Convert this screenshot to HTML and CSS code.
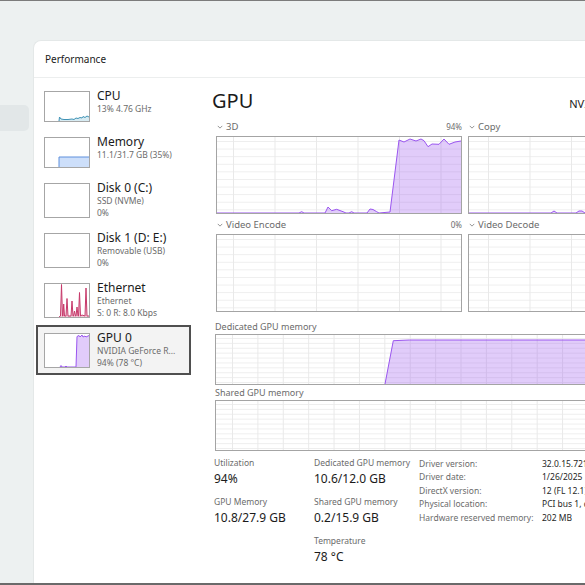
FILE: index.html
```html
<!DOCTYPE html>
<html lang="en">
<head>
    <meta charset="UTF-8">
    <meta name="viewport" content="width=device-width, initial-scale=1.0">
    <title>Task Manager - Performance</title>
    <link rel="stylesheet" href="styles.css">
</head>
<body>
<div class="screen">

    <!-- left navigation strip -->
    <nav class="nav">
        <div class="nav-pill"></div>
    </nav>

    <section class="card">
        <header class="card-header">Performance</header>

        <div class="card-body">
            <!-- device list -->
            <aside class="sidebar">
                <div class="item">
                    <div class="thumb">
                        <svg viewBox="0 0 44 29" preserveAspectRatio="none">
                            <polygon class="fill-cpu" points="14,29 14.5,25 16,27 19,27.5 23,27.5 27,27 29,27.5 31,26 33,26.5 35,25.5 37,26 38,24.5 40,25.5 42,24 44,25 44,29"/>
                            <polyline class="line-cpu" points="14,29 14.5,25 16,27 19,27.5 23,27.5 27,27 29,27.5 31,26 33,26.5 35,25.5 37,26 38,24.5 40,25.5 42,24 44,25"/>
                        </svg>
                    </div>
                    <div class="item-text">
                        <div class="item-title">CPU</div>
                        <div class="item-sub">13% 4.76 GHz</div>
                    </div>
                </div>

                <div class="item">
                    <div class="thumb">
                        <svg viewBox="0 0 44 29" preserveAspectRatio="none">
                            <polygon class="fill-mem" points="14,29 14,19 44,19 44,29"/>
                            <polyline class="line-mem" points="14,29 14,19 44,19"/>
                        </svg>
                    </div>
                    <div class="item-text">
                        <div class="item-title">Memory</div>
                        <div class="item-sub">11.1/31.7 GB (35%)</div>
                    </div>
                </div>

                <div class="item">
                    <div class="thumb thumb-lg"></div>
                    <div class="item-text">
                        <div class="item-title">Disk 0 (C:)</div>
                        <div class="item-sub">SSD (NVMe)</div>
                        <div class="item-sub">0%</div>
                    </div>
                </div>

                <div class="item">
                    <div class="thumb thumb-lg"></div>
                    <div class="item-text">
                        <div class="item-title">Disk 1 (D: E:)</div>
                        <div class="item-sub">Removable (USB)</div>
                        <div class="item-sub">0%</div>
                    </div>
                </div>

                <div class="item">
                    <div class="thumb thumb-lg">
                        <svg viewBox="0 0 44 33" preserveAspectRatio="none">
                            <polygon class="fill-net" points="14,33 15.5,32 16.5,0.5 17.5,32 18,32 18.7,20 19.5,32 21,32 22,14.5 23,32 26,32 27,17 28,32 28.5,32 29.5,27 30.5,32 31,32 32,23 33,32 33.5,32 34.5,8.5 35.5,32 37,31 40,32 41,4 42,32 44,32 44,33"/>
                            <polyline class="line-net" points="14,33 15.5,32 16.5,0.5 17.5,32 18,32 18.7,20 19.5,32 21,32 22,14.5 23,32 26,32 27,17 28,32 28.5,32 29.5,27 30.5,32 31,32 32,23 33,32 33.5,32 34.5,8.5 35.5,32 37,31 40,32 41,4 42,32 44,32"/>
                        </svg>
                    </div>
                    <div class="item-text">
                        <div class="item-title">Ethernet</div>
                        <div class="item-sub">Ethernet</div>
                        <div class="item-sub">S: 0 R: 8.0 Kbps</div>
                    </div>
                </div>

                <div class="item active">
                    <div class="thumb thumb-lg">
                        <svg viewBox="0 0 44 33" preserveAspectRatio="none">
                            <polygon class="fill-gpu" points="15,33 16,31.5 17,33 20,33 21,32 22,33 31,33 32,2.5 34,1.5 35,3 37,1 38,3 40,2 41,3 44,1.5 44,33"/>
                            <polyline class="line-gpu" points="15,33 16,31.5 17,33 20,33 21,32 22,33 31,33 32,2.5 34,1.5 35,3 37,1 38,3 40,2 41,3 44,1.5"/>
                        </svg>
                    </div>
                    <div class="item-text">
                        <div class="item-title">GPU 0</div>
                        <div class="item-sub">NVIDIA GeForce R...</div>
                        <div class="item-sub">94% (78 °C)</div>
                    </div>
                </div>
            </aside>

            <!-- GPU details -->
            <main class="main">
                <div class="main-head">
                    <h1>GPU</h1>
                    <span class="gpu-name">NVIDIA GeForce RTX 4070 Ti</span>
                </div>

                <div class="engines">
                    <div class="engine">
                        <div class="graph-label">
                            <svg class="chevron" viewBox="0 0 8 5"><polyline points="1,1 4,4 7,1"/></svg>
                            <span>3D</span>
                            <span class="pct">94%</span>
                        </div>
                        <div class="graph graph-engine">
                            <svg viewBox="0 0 244 76" preserveAspectRatio="none">
                                <polygon class="fill-gpu" points="0,76 82,76 84.7,74.7 87,76 108,76 111,70 114.7,73.7 119.7,72.3 126,74.7 129,76 132,76 134.7,74.7 137,76 150,76 153,72 156,72.5 159.7,74.7 162,76 173,75 182,3 187,5 193,2 199,4 204,2 207,3.7 211,9.7 215,7 222,7.3 227,2 232,7.3 238,5 244,4 244,76"/>
                                <polyline class="line-gpu" points="0,76 82,76 84.7,74.7 87,76 108,76 111,70 114.7,73.7 119.7,72.3 126,74.7 129,76 132,76 134.7,74.7 137,76 150,76 153,72 156,72.5 159.7,74.7 162,76 173,75 182,3 187,5 193,2 199,4 204,2 207,3.7 211,9.7 215,7 222,7.3 227,2 232,7.3 238,5 244,4"/>
                            </svg>
                        </div>
                    </div>

                    <div class="engine">
                        <div class="graph-label">
                            <svg class="chevron" viewBox="0 0 8 5"><polyline points="1,1 4,4 7,1"/></svg>
                            <span>Copy</span>
                            <span class="pct">0%</span>
                        </div>
                        <div class="graph graph-engine shift">
                            <svg viewBox="0 0 244 76" preserveAspectRatio="none">
                                <polygon class="fill-gpu" points="82,76 85,74 88,76 107,76 110,74 113,74 116,76"/>
                                <polyline class="line-gpu" points="0,76 82,76 85,74 88,76 107,76 110,74 113,74 116,76 244,76"/>
                            </svg>
                        </div>
                    </div>

                    <div class="engine">
                        <div class="graph-label">
                            <svg class="chevron" viewBox="0 0 8 5"><polyline points="1,1 4,4 7,1"/></svg>
                            <span>Video Encode</span>
                            <span class="pct">0%</span>
                        </div>
                        <div class="graph graph-engine"></div>
                    </div>

                    <div class="engine">
                        <div class="graph-label">
                            <svg class="chevron" viewBox="0 0 8 5"><polyline points="1,1 4,4 7,1"/></svg>
                            <span>Video Decode</span>
                            <span class="pct">0%</span>
                        </div>
                        <div class="graph graph-engine shift"></div>
                    </div>
                </div>

                <div class="mem-label first">Dedicated GPU memory</div>
                <div class="graph graph-mem">
                    <svg viewBox="0 0 497 49" preserveAspectRatio="none">
                        <polygon class="fill-gpu" points="169,49 177.3,5.7 193.3,5 497,5 497,49"/>
                        <polyline class="line-gpu" points="169,49 177.3,5.7 193.3,5 497,5"/>
                    </svg>
                </div>

                <div class="mem-label">Shared GPU memory</div>
                <div class="graph graph-mem"></div>

                <div class="stats">
                    <div class="stat-col">
                        <div class="stat">
                            <div class="stat-label">Utilization</div>
                            <div class="stat-value">94%</div>
                        </div>
                        <div class="stat">
                            <div class="stat-label">GPU Memory</div>
                            <div class="stat-value">10.8/27.9 GB</div>
                        </div>
                    </div>
                    <div class="stat-col">
                        <div class="stat">
                            <div class="stat-label">Dedicated GPU memory</div>
                            <div class="stat-value">10.6/12.0 GB</div>
                        </div>
                        <div class="stat">
                            <div class="stat-label">Shared GPU memory</div>
                            <div class="stat-value">0.2/15.9 GB</div>
                        </div>
                        <div class="stat">
                            <div class="stat-label">Temperature</div>
                            <div class="stat-value">78 °C</div>
                        </div>
                    </div>
                    <dl class="details">
                        <dt>Driver version:</dt><dd>32.0.15.7216</dd>
                        <dt>Driver date:</dt><dd>1/26/2025</dd>
                        <dt>DirectX version:</dt><dd>12 (FL 12.1)</dd>
                        <dt>Physical location:</dt><dd>PCI bus 1, device 0, function 0</dd>
                        <dt>Hardware reserved memory:</dt><dd>202 MB</dd>
                    </dl>
                </div>
            </main>
        </div>
    </section>

</div>
</body>
</html>
```

FILE: styles.css
```css
/* --- Page --- */
body {
    margin: 0;
    font-family: "Noto Sans", "Open Sans", sans-serif;
    color: #1b1b1b;
    background: #edf1f1;
}

.screen {
    display: flex;
    width: 585px;
    height: 585px;
    box-sizing: border-box;
    border-top: 1px solid #7c7c7c;
    border-bottom: 2px solid #6a6a6a;
    overflow: hidden;
}

/* --- Nav strip --- */
.nav {
    width: 33px;
    flex: none;
    padding-top: 104px;
}

.nav-pill {
    width: 29px;
    height: 26px;
    background: #e2e7e8;
    border-radius: 0 5px 5px 0;
}

/* --- Card --- */
.card {
    flex: 1;
    min-width: 0;
    margin-top: 39px;
    background: #fff;
    border-top: 1px solid #e4e8e8;
    border-left: 1px solid #e4e8e8;
    border-top-left-radius: 8px;
    overflow: hidden;
    display: flex;
    flex-direction: column;
}

.card-header {
    height: 36px;
    flex: none;
    display: flex;
    align-items: center;
    padding-left: 11px;
    font-size: 10px;
    border-bottom: 1px solid #eceeee;
}

.card-body {
    display: flex;
    flex: 1;
}

/* --- Sidebar list --- */
.sidebar {
    width: 171px;
    flex: none;
    padding: 5px 0 0 2px;
    box-sizing: border-box;
}

.item {
    display: flex;
    gap: 7px;
    width: 155px;
    box-sizing: border-box;
    padding: 7px 6px 6px 7px;
    border: 1px solid transparent;
}

.item.active {
    background: #f3f3f3;
    border-color: #4f4f4f;
    box-shadow: inset 0 0 0 1px #4f4f4f;
}

.thumb {
    width: 46px;
    height: 31px;
    flex: none;
    box-sizing: border-box;
    border: 1px solid #a6a6a6;
    background: #fff;
}

.thumb-lg { height: 35px; }

.thumb svg,
.graph svg {
    display: block;
    width: 100%;
    height: 100%;
}

.item-text {
    margin-top: -2px;
    white-space: nowrap;
}

.item-title {
    font-size: 12px;
    line-height: 14px;
}

.item-sub {
    font-size: 8.5px;
    line-height: 11.5px;
    color: #6b6b6b;
}

/* graph colours */
.line-cpu, .line-mem, .line-net, .line-gpu { fill: none; stroke-width: 1; vector-effect: non-scaling-stroke; }
.line-cpu { stroke: #3f92b5; }
.fill-cpu { fill: #d7ebf2; }
.line-mem { stroke: #5f90dc; }
.fill-mem { fill: #cddffa; }
.line-net { stroke: #c73a6b; }
.fill-net { fill: #f2cbd9; }
.line-gpu { stroke: #9a55ef; }
.fill-gpu { fill: rgba(155, 85, 240, 0.3); }

/* --- Main panel --- */
.main {
    width: 499px;
    flex: none;
    padding: 11px 0 0 10px;
}

.main-head {
    display: flex;
    justify-content: space-between;
    align-items: baseline;
}

.main-head h1 {
    margin: 0 0 0 -3px;
    font-size: 20px;
    line-height: 24px;
    font-weight: 400;
}

.gpu-name {
    font-size: 11px;
}

.engines {
    display: grid;
    grid-template-columns: 246px 246px;
    column-gap: 6px;
    row-gap: 4px;
    margin-top: 7px;
    padding-left: 1px;
}

.graph-label {
    display: flex;
    align-items: center;
    height: 13px;
    margin-bottom: 3px;
    font-size: 9.5px;
    color: #6b6b6b;
}

.chevron {
    width: 6px;
    height: 4px;
    margin: 0 3px 0 1px;
    fill: none;
    stroke: #8a8a8a;
    stroke-width: 1.2;
}

.graph-label .pct {
    margin-left: auto;
    font-size: 8px;
}

.graph {
    box-sizing: border-box;
    border: 1px solid #a4a4a4;
    background-color: #fff;
    background-image:
        linear-gradient(to right, #e9e9e9 1px, transparent 1px),
        linear-gradient(to bottom, #eeeeee 1px, transparent 1px);
}

.graph-engine {
    height: 78px;
    background-size: 41.5px 100%, 100% 7.6px;
    background-position: 16px 0, 0 4px;
}

.graph-engine.shift { background-position: 19px 0, 0 4px; }

.graph-mem {
    height: 51px;
    background-size: 25.4px 100%, 100% 4.9px;
    background-position: 16px 0, 0 3px;
}

.mem-label {
    font-size: 9px;
    line-height: 13px;
    color: #6b6b6b;
    margin: 1px 0 1px;
}

.mem-label.first { margin-top: 8px; }

/* --- Stats --- */
.stats {
    display: grid;
    grid-template-columns: 100px 105px auto;
    align-items: start;
    margin-top: 6px;
    margin-left: -1px;
}

.stat { margin-bottom: 9px; }

.stat-label {
    font-size: 8.5px;
    line-height: 12px;
    color: #6b6b6b;
    margin-bottom: 2px;
}

.stat-value {
    font-size: 12px;
    line-height: 16px;
}

.details {
    display: grid;
    grid-template-columns: 123px auto;
    margin: 0;
    font-size: 8.5px;
    line-height: 13.4px;
    white-space: nowrap;
}

.details dt { color: #6b6b6b; }
.details dd { margin: 0; color: #1f1f1f; }
```
